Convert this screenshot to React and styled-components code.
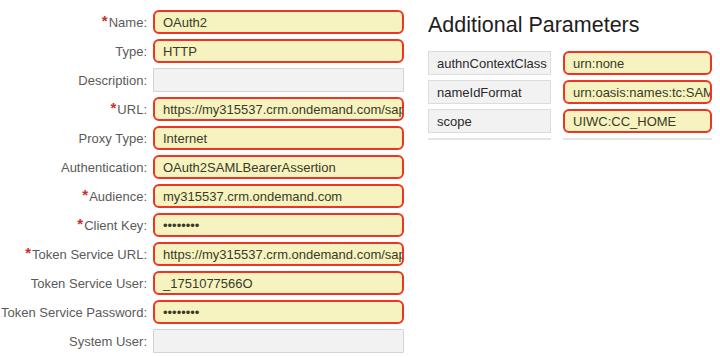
import React from 'react';
import styled, { createGlobalStyle } from 'styled-components';

const fields = [
  { label: 'Name', required: true, value: 'OAuth2', marked: true },
  { label: 'Type', value: 'HTTP', marked: true },
  { label: 'Description', value: '' },
  { label: 'URL', required: true, value: 'https://my315537.crm.ondemand.com/sap/c4c/odata/v1', marked: true },
  { label: 'Proxy Type', value: 'Internet', marked: true },
  { label: 'Authentication', value: 'OAuth2SAMLBearerAssertion', marked: true },
  { label: 'Audience', required: true, value: 'my315537.crm.ondemand.com', marked: true },
  { label: 'Client Key', required: true, value: '••••••••', marked: true },
  { label: 'Token Service URL', required: true, value: 'https://my315537.crm.ondemand.com/sap/bc/sec/oauth2/token', marked: true },
  { label: 'Token Service User', value: '_1751077566O', marked: true },
  { label: 'Token Service Password', value: '••••••••', marked: true },
  { label: 'System User', value: '' },
];

const params = [
  { key: 'authnContextClass', value: 'urn:none' },
  { key: 'nameIdFormat', value: 'urn:oasis:names:tc:SAML:1.1:nameid-format:unspecified' },
  { key: 'scope', value: 'UIWC:CC_HOME' },
];

const App = () => {
  return (
    <>
      <GlobalStyle />
      <Page>
        <Form>
          {fields.map((f) => (
            <React.Fragment key={f.label}>
              <Label>
                {f.required && <Star>*</Star>}
                {f.label}:
              </Label>
              <Field marked={f.marked ? 1 : 0}>{f.value}</Field>
            </React.Fragment>
          ))}
        </Form>
        <Side>
          <Title>Additional Parameters</Title>
          <ParamTable>
            {params.map((p) => (
              <React.Fragment key={p.key}>
                <ParamKey>{p.key}</ParamKey>
                <Field marked={1}>{p.value}</Field>
              </React.Fragment>
            ))}
            <EmptyRow />
            <EmptyRow />
          </ParamTable>
        </Side>
      </Page>
    </>
  );
};

const GlobalStyle = createGlobalStyle`
  html, body {
    margin: 0;
    padding: 0;
    background: #fff;
    font-family: "Liberation Sans", Arial, sans-serif;
  }
`;

const Page = styled.div`
  display: flex;
  align-items: flex-start;
  padding-top: 10px;
  width: 720px;
  height: 357px;
  box-sizing: border-box;
  overflow: hidden;
`;

const Form = styled.div`
  display: grid;
  grid-template-columns: 147px 251px;
  grid-auto-rows: 24px;
  column-gap: 6px;
  row-gap: 5px;
`;

const Label = styled.div`
  display: flex;
  align-items: center;
  justify-content: flex-end;
  font-size: 13px;
  color: #5a5a5a;
  white-space: nowrap;
`;

const Star = styled.span`
  color: #c9302c;
  font-weight: bold;
  font-size: 15px;
  margin-right: 1px;
  position: relative;
  top: -2px;
`;

const Field = styled.div`
  box-sizing: border-box;
  height: 24px;
  display: flex;
  align-items: center;
  padding: 0 8px;
  font-size: 13px;
  color: #3a3a26;
  white-space: nowrap;
  overflow: hidden;
  background: ${(p) => (p.marked ? '#f6f3c0' : '#f2f2f2')};
  border: ${(p) => (p.marked ? '2px solid #ee3524' : '1px solid #d3d3d3')};
  border-radius: ${(p) => (p.marked ? '6px' : '1px')};
`;

const Side = styled.div`
  margin-left: 24px;
  display: flex;
  flex-direction: column;
`;

const Title = styled.div`
  font-size: 21.5px;
  line-height: 24px;
  padding-top: 3px;
  color: #1e1e1e;
  margin-bottom: 14px;
  white-space: nowrap;
`;

const ParamTable = styled.div`
  display: grid;
  grid-template-columns: 123px 149px;
  grid-auto-rows: 24px;
  column-gap: 12px;
  row-gap: 5px;
`;

const ParamKey = styled.div`
  box-sizing: border-box;
  display: flex;
  align-items: center;
  padding: 0 8px;
  font-size: 13px;
  color: #2a2a2a;
  background: #f2f2f2;
  border: 1px solid #dcdcdc;
`;

const EmptyRow = styled.div`
  height: 2px;
  background: #e4e4e4;
`;

export default App;
